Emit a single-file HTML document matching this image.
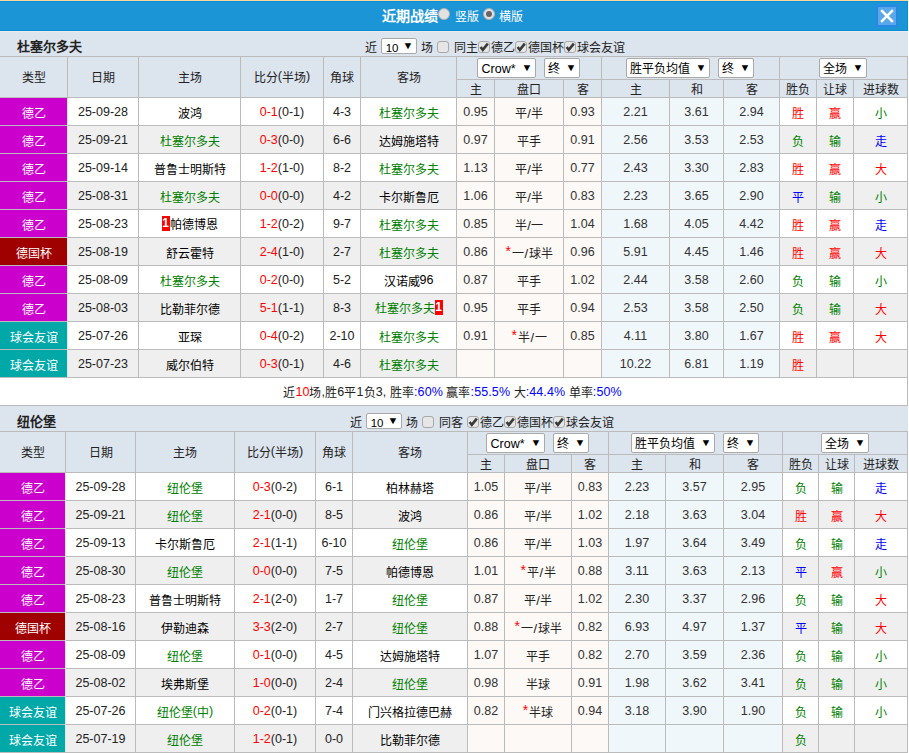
<!DOCTYPE html><html lang="zh-CN"><head><meta charset="utf-8"><style>
html,body{margin:0;padding:0;}
body{width:909px;height:753px;position:relative;overflow:hidden;background:#fff;font-family:"Liberation Sans",sans-serif;font-size:12px;color:#222;font-weight:500;}
.a{position:absolute;}
.t{display:flex;align-items:center;justify-content:center;white-space:nowrap;line-height:14px;}
.n{font-size:12.5px;position:relative;top:-2px;}
.sel{box-sizing:content-box;background:#fff;border:1px solid #a9a9a9;border-radius:2px;display:flex;align-items:center;justify-content:center;white-space:nowrap;font-size:12px;color:#000;line-height:14px;}
.sel .arr{font-size:10px;margin-left:6px;transform:scaleX(1.1);}
.cb{width:10px;height:10px;border:1px solid #a8a8a8;border-radius:3px;background:#e6e6e6;}
.cb svg{position:absolute;left:-1px;top:-1px;}
.rd{width:10px;height:10px;border:1px solid #b0b0b0;border-radius:50%;background:#e2e2e2;}
.sum .n{top:-1px;}
.sl{font-size:13px;padding:0 0.5px;}
.st{color:#f00;font-size:14px;margin-right:1px;position:relative;top:-2px;}
.flag{display:inline-block;position:relative;top:-2px;vertical-align:middle;width:8px;height:15px;background:#f00;color:#fff;font-weight:bold;font-size:12px;line-height:15px;text-align:center;}
</style></head><body><div class="a" style="left:0px;top:0px;width:908px;height:1px;background:#fcd698;"></div><div class="a" style="left:0px;top:1px;width:908px;height:30px;background:#1b95d6;box-sizing:border-box;border:1px solid #0b8dd3;border-left:none;border-top-color:#0a8dd8;"></div><div class="a t" style="left:382px;top:5px;width:60px;height:22px;color:#fff;font-weight:bold;font-size:14px;justify-content:flex-start;"><span>近期战绩</span></div><div class="a rd" style="left:438px;top:8px;"></div><div class="a t" style="left:455px;top:6px;width:30px;height:22px;color:#fff;font-size:12px;justify-content:flex-start;"><span>竖版</span></div><div class="a rd" style="left:483px;top:8px;"><div style="position:absolute;left:2px;top:2px;width:6px;height:6px;border-radius:50%;background:#666;"></div></div><div class="a t" style="left:499px;top:6px;width:30px;height:22px;color:#fff;font-size:12px;justify-content:flex-start;"><span>横版</span></div><div class="a" style="left:876px;top:5px;width:22px;height:22px;background:#5aa7ea;box-sizing:border-box;border:2px solid #2a87e3;"></div><svg class="a" style="left:876px;top:5px" width="22" height="22" viewBox="0 0 22 22"><path d="M6 6 L16 16 M16 6 L6 16" stroke="#fff" stroke-width="2.5" stroke-linecap="square"/></svg><div class="a" style="left:0px;top:31px;width:908px;height:25px;background:#dce4ee;"></div><div class="a t" style="left:17px;top:34px;width:100px;height:25px;font-weight:bold;font-size:13px;color:#222;justify-content:flex-start;"><span>杜塞尔多夫</span></div><div class="a t" style="left:365px;top:35px;width:14px;height:25px;color:#222;justify-content:flex-start;"><span>近</span></div><div class="a sel" style="left:381px;top:38px;width:34px;height:14px;"><span style="position:relative;top:1px"><span class="n" style="font-size:11.5px;top:1px;left:1px;">10</span></span><span class="arr">&#9660;</span></div><div class="a t" style="left:421px;top:35px;width:14px;height:25px;color:#222;justify-content:flex-start;"><span>场</span></div><div class="a cb" style="left:437px;top:41px;"></div><div class="a t" style="left:454px;top:35px;width:26px;height:25px;color:#222;justify-content:flex-start;"><span>同主</span></div><div class="a cb" style="left:478px;top:41px;"><svg width="12" height="12" viewBox="0 0 12 12"><path d="M2.6 6 L4.8 8.8 L9.8 2.6" stroke="#3a3a3a" stroke-width="2.6" fill="none"/></svg></div><div class="a t" style="left:491px;top:35px;width:26px;height:25px;color:#222;justify-content:flex-start;"><span>德乙</span></div><div class="a cb" style="left:515px;top:41px;"><svg width="12" height="12" viewBox="0 0 12 12"><path d="M2.6 6 L4.8 8.8 L9.8 2.6" stroke="#3a3a3a" stroke-width="2.6" fill="none"/></svg></div><div class="a t" style="left:528px;top:35px;width:38px;height:25px;color:#222;justify-content:flex-start;"><span>德国杯</span></div><div class="a cb" style="left:564px;top:41px;"><svg width="12" height="12" viewBox="0 0 12 12"><path d="M2.6 6 L4.8 8.8 L9.8 2.6" stroke="#3a3a3a" stroke-width="2.6" fill="none"/></svg></div><div class="a t" style="left:577px;top:35px;width:50px;height:25px;color:#222;justify-content:flex-start;"><span>球会友谊</span></div><div class="a" style="left:0px;top:56px;width:908px;height:41px;background:#dce4ee;"></div><div class="a" style="left:0px;top:97px;width:908px;height:28px;background:#ffffff;"></div><div class="a" style="left:457px;top:97px;width:144px;height:28px;background:#fdf9f6;"></div><div class="a" style="left:602px;top:97px;width:177px;height:28px;background:#f0f7fb;"></div><div class="a" style="left:0px;top:98px;width:67px;height:27px;background:#cc00cc;"></div><div class="a" style="left:0px;top:125px;width:908px;height:28px;background:#efefef;"></div><div class="a" style="left:457px;top:125px;width:144px;height:28px;background:#fdf9f6;"></div><div class="a" style="left:602px;top:125px;width:177px;height:28px;background:#f0f7fb;"></div><div class="a" style="left:0px;top:126px;width:67px;height:27px;background:#cc00cc;"></div><div class="a" style="left:0px;top:153px;width:908px;height:28px;background:#ffffff;"></div><div class="a" style="left:457px;top:153px;width:144px;height:28px;background:#fdf9f6;"></div><div class="a" style="left:602px;top:153px;width:177px;height:28px;background:#f0f7fb;"></div><div class="a" style="left:0px;top:154px;width:67px;height:27px;background:#cc00cc;"></div><div class="a" style="left:0px;top:181px;width:908px;height:28px;background:#efefef;"></div><div class="a" style="left:457px;top:181px;width:144px;height:28px;background:#fdf9f6;"></div><div class="a" style="left:602px;top:181px;width:177px;height:28px;background:#f0f7fb;"></div><div class="a" style="left:0px;top:182px;width:67px;height:27px;background:#cc00cc;"></div><div class="a" style="left:0px;top:209px;width:908px;height:28px;background:#ffffff;"></div><div class="a" style="left:457px;top:209px;width:144px;height:28px;background:#fdf9f6;"></div><div class="a" style="left:602px;top:209px;width:177px;height:28px;background:#f0f7fb;"></div><div class="a" style="left:0px;top:210px;width:67px;height:27px;background:#cc00cc;"></div><div class="a" style="left:0px;top:237px;width:908px;height:28px;background:#efefef;"></div><div class="a" style="left:457px;top:237px;width:144px;height:28px;background:#fdf9f6;"></div><div class="a" style="left:602px;top:237px;width:177px;height:28px;background:#f0f7fb;"></div><div class="a" style="left:0px;top:238px;width:67px;height:27px;background:#9f0000;"></div><div class="a" style="left:0px;top:265px;width:908px;height:28px;background:#ffffff;"></div><div class="a" style="left:457px;top:265px;width:144px;height:28px;background:#fdf9f6;"></div><div class="a" style="left:602px;top:265px;width:177px;height:28px;background:#f0f7fb;"></div><div class="a" style="left:0px;top:266px;width:67px;height:27px;background:#cc00cc;"></div><div class="a" style="left:0px;top:293px;width:908px;height:28px;background:#efefef;"></div><div class="a" style="left:457px;top:293px;width:144px;height:28px;background:#fdf9f6;"></div><div class="a" style="left:602px;top:293px;width:177px;height:28px;background:#f0f7fb;"></div><div class="a" style="left:0px;top:294px;width:67px;height:27px;background:#cc00cc;"></div><div class="a" style="left:0px;top:321px;width:908px;height:28px;background:#ffffff;"></div><div class="a" style="left:457px;top:321px;width:144px;height:28px;background:#fdf9f6;"></div><div class="a" style="left:602px;top:321px;width:177px;height:28px;background:#f0f7fb;"></div><div class="a" style="left:0px;top:322px;width:67px;height:27px;background:#00a8a8;"></div><div class="a" style="left:0px;top:349px;width:908px;height:28px;background:#efefef;"></div><div class="a" style="left:457px;top:349px;width:144px;height:28px;background:#fdf9f6;"></div><div class="a" style="left:602px;top:349px;width:177px;height:28px;background:#f0f7fb;"></div><div class="a" style="left:0px;top:350px;width:67px;height:27px;background:#00a8a8;"></div><div class="a" style="left:0px;top:56px;width:908px;height:1px;background:#bbbbbb;"></div><div class="a" style="left:457px;top:79px;width:451px;height:1px;background:#bbbbbb;"></div><div class="a" style="left:0px;top:97px;width:908px;height:1px;background:#bbbbbb;"></div><div class="a" style="left:0px;top:125px;width:908px;height:1px;background:#bbbbbb;"></div><div class="a" style="left:0px;top:153px;width:908px;height:1px;background:#bbbbbb;"></div><div class="a" style="left:0px;top:181px;width:908px;height:1px;background:#bbbbbb;"></div><div class="a" style="left:0px;top:209px;width:908px;height:1px;background:#bbbbbb;"></div><div class="a" style="left:0px;top:237px;width:908px;height:1px;background:#bbbbbb;"></div><div class="a" style="left:0px;top:265px;width:908px;height:1px;background:#bbbbbb;"></div><div class="a" style="left:0px;top:293px;width:908px;height:1px;background:#bbbbbb;"></div><div class="a" style="left:0px;top:321px;width:908px;height:1px;background:#bbbbbb;"></div><div class="a" style="left:0px;top:349px;width:908px;height:1px;background:#bbbbbb;"></div><div class="a" style="left:0px;top:377px;width:908px;height:1px;background:#bbbbbb;"></div><div class="a" style="left:67px;top:56px;width:1px;height:322px;background:#bbbbbb;"></div><div class="a" style="left:138px;top:56px;width:1px;height:322px;background:#bbbbbb;"></div><div class="a" style="left:240px;top:56px;width:1px;height:322px;background:#bbbbbb;"></div><div class="a" style="left:323px;top:56px;width:1px;height:322px;background:#bbbbbb;"></div><div class="a" style="left:360px;top:56px;width:1px;height:322px;background:#bbbbbb;"></div><div class="a" style="left:456px;top:56px;width:1px;height:322px;background:#bbbbbb;"></div><div class="a" style="left:494px;top:79px;width:1px;height:299px;background:#bbbbbb;"></div><div class="a" style="left:563px;top:79px;width:1px;height:299px;background:#bbbbbb;"></div><div class="a" style="left:601px;top:56px;width:1px;height:322px;background:#bbbbbb;"></div><div class="a" style="left:669px;top:79px;width:1px;height:299px;background:#bbbbbb;"></div><div class="a" style="left:723px;top:79px;width:1px;height:299px;background:#bbbbbb;"></div><div class="a" style="left:779px;top:56px;width:1px;height:322px;background:#bbbbbb;"></div><div class="a" style="left:816px;top:79px;width:1px;height:299px;background:#bbbbbb;"></div><div class="a" style="left:853px;top:79px;width:1px;height:299px;background:#bbbbbb;"></div><div class="a" style="left:907px;top:56px;width:1px;height:322px;background:#bbbbbb;"></div><div class="a" style="left:67px;top:98px;width:1px;height:279px;background:#dfe8df;"></div><div class="a t" style="left:0px;top:58px;width:67px;height:40px;color:#222;"><span>类型</span></div><div class="a t" style="left:68px;top:58px;width:70px;height:40px;color:#222;"><span>日期</span></div><div class="a t" style="left:139px;top:58px;width:101px;height:40px;color:#222;"><span>主场</span></div><div class="a t" style="left:241px;top:58px;width:82px;height:40px;color:#222;"><span>比分<span class="n">(</span>半场<span class="n">)</span></span></div><div class="a t" style="left:324px;top:58px;width:36px;height:40px;color:#222;"><span>角球</span></div><div class="a t" style="left:361px;top:58px;width:95px;height:40px;color:#222;"><span>客场</span></div><div class="a t" style="left:457px;top:81px;width:37px;height:17px;color:#222;"><span>主</span></div><div class="a t" style="left:495px;top:81px;width:68px;height:17px;color:#222;"><span>盘口</span></div><div class="a t" style="left:564px;top:81px;width:37px;height:17px;color:#222;"><span>客</span></div><div class="a t" style="left:602px;top:81px;width:67px;height:17px;color:#222;"><span>主</span></div><div class="a t" style="left:670px;top:81px;width:53px;height:17px;color:#222;"><span>和</span></div><div class="a t" style="left:724px;top:81px;width:55px;height:17px;color:#222;"><span>客</span></div><div class="a t" style="left:780px;top:81px;width:36px;height:17px;color:#222;"><span>胜负</span></div><div class="a t" style="left:817px;top:81px;width:36px;height:17px;color:#222;"><span>让球</span></div><div class="a t" style="left:854px;top:81px;width:53px;height:17px;color:#222;"><span>进球数</span></div><div class="a t" style="left:0px;top:100px;width:67px;height:27px;color:#fff;"><span>德乙</span></div><div class="a t" style="left:68px;top:100px;width:70px;height:27px;color:#222;"><span><span class="n">25-09-28</span></span></div><div class="a t" style="left:139px;top:100px;width:101px;height:27px;color:#000;"><span>波鸿</span></div><div class="a t" style="left:241px;top:100px;width:82px;height:27px;color:#222;"><span><span class="n" style="color:#f00">0-1</span><span class="n">(0-1)</span></span></div><div class="a t" style="left:324px;top:100px;width:36px;height:27px;color:#222;"><span><span class="n">4-3</span></span></div><div class="a t" style="left:361px;top:100px;width:95px;height:27px;color:#008000;"><span>杜塞尔多夫</span></div><div class="a t" style="left:457px;top:100px;width:37px;height:27px;color:#333;"><span><span class="n">0.95</span></span></div><div class="a t" style="left:495px;top:100px;width:68px;height:27px;color:#222;"><span>平<span class="sl">/</span>半</span></div><div class="a t" style="left:564px;top:100px;width:37px;height:27px;color:#333;"><span><span class="n">0.93</span></span></div><div class="a t" style="left:602px;top:100px;width:67px;height:27px;color:#333;"><span><span class="n">2.21</span></span></div><div class="a t" style="left:670px;top:100px;width:53px;height:27px;color:#333;"><span><span class="n">3.61</span></span></div><div class="a t" style="left:724px;top:100px;width:55px;height:27px;color:#333;"><span><span class="n">2.94</span></span></div><div class="a t" style="left:780px;top:100px;width:36px;height:27px;color:#ff0000;"><span>胜</span></div><div class="a t" style="left:817px;top:100px;width:36px;height:27px;color:#ff0000;"><span>赢</span></div><div class="a t" style="left:854px;top:100px;width:53px;height:27px;color:#008000;"><span>小</span></div><div class="a t" style="left:0px;top:128px;width:67px;height:27px;color:#fff;"><span>德乙</span></div><div class="a t" style="left:68px;top:128px;width:70px;height:27px;color:#222;"><span><span class="n">25-09-21</span></span></div><div class="a t" style="left:139px;top:128px;width:101px;height:27px;color:#008000;"><span>杜塞尔多夫</span></div><div class="a t" style="left:241px;top:128px;width:82px;height:27px;color:#222;"><span><span class="n" style="color:#f00">0-3</span><span class="n">(0-0)</span></span></div><div class="a t" style="left:324px;top:128px;width:36px;height:27px;color:#222;"><span><span class="n">6-6</span></span></div><div class="a t" style="left:361px;top:128px;width:95px;height:27px;color:#000;"><span>达姆施塔特</span></div><div class="a t" style="left:457px;top:128px;width:37px;height:27px;color:#333;"><span><span class="n">0.97</span></span></div><div class="a t" style="left:495px;top:128px;width:68px;height:27px;color:#222;"><span>平手</span></div><div class="a t" style="left:564px;top:128px;width:37px;height:27px;color:#333;"><span><span class="n">0.91</span></span></div><div class="a t" style="left:602px;top:128px;width:67px;height:27px;color:#333;"><span><span class="n">2.56</span></span></div><div class="a t" style="left:670px;top:128px;width:53px;height:27px;color:#333;"><span><span class="n">3.53</span></span></div><div class="a t" style="left:724px;top:128px;width:55px;height:27px;color:#333;"><span><span class="n">2.53</span></span></div><div class="a t" style="left:780px;top:128px;width:36px;height:27px;color:#008000;"><span>负</span></div><div class="a t" style="left:817px;top:128px;width:36px;height:27px;color:#008000;"><span>输</span></div><div class="a t" style="left:854px;top:128px;width:53px;height:27px;color:#0000ff;"><span>走</span></div><div class="a t" style="left:0px;top:156px;width:67px;height:27px;color:#fff;"><span>德乙</span></div><div class="a t" style="left:68px;top:156px;width:70px;height:27px;color:#222;"><span><span class="n">25-09-14</span></span></div><div class="a t" style="left:139px;top:156px;width:101px;height:27px;color:#000;"><span>普鲁士明斯特</span></div><div class="a t" style="left:241px;top:156px;width:82px;height:27px;color:#222;"><span><span class="n" style="color:#f00">1-2</span><span class="n">(1-0)</span></span></div><div class="a t" style="left:324px;top:156px;width:36px;height:27px;color:#222;"><span><span class="n">8-2</span></span></div><div class="a t" style="left:361px;top:156px;width:95px;height:27px;color:#008000;"><span>杜塞尔多夫</span></div><div class="a t" style="left:457px;top:156px;width:37px;height:27px;color:#333;"><span><span class="n">1.13</span></span></div><div class="a t" style="left:495px;top:156px;width:68px;height:27px;color:#222;"><span>平<span class="sl">/</span>半</span></div><div class="a t" style="left:564px;top:156px;width:37px;height:27px;color:#333;"><span><span class="n">0.77</span></span></div><div class="a t" style="left:602px;top:156px;width:67px;height:27px;color:#333;"><span><span class="n">2.43</span></span></div><div class="a t" style="left:670px;top:156px;width:53px;height:27px;color:#333;"><span><span class="n">3.30</span></span></div><div class="a t" style="left:724px;top:156px;width:55px;height:27px;color:#333;"><span><span class="n">2.83</span></span></div><div class="a t" style="left:780px;top:156px;width:36px;height:27px;color:#ff0000;"><span>胜</span></div><div class="a t" style="left:817px;top:156px;width:36px;height:27px;color:#ff0000;"><span>赢</span></div><div class="a t" style="left:854px;top:156px;width:53px;height:27px;color:#ff0000;"><span>大</span></div><div class="a t" style="left:0px;top:184px;width:67px;height:27px;color:#fff;"><span>德乙</span></div><div class="a t" style="left:68px;top:184px;width:70px;height:27px;color:#222;"><span><span class="n">25-08-31</span></span></div><div class="a t" style="left:139px;top:184px;width:101px;height:27px;color:#008000;"><span>杜塞尔多夫</span></div><div class="a t" style="left:241px;top:184px;width:82px;height:27px;color:#222;"><span><span class="n" style="color:#f00">0-0</span><span class="n">(0-0)</span></span></div><div class="a t" style="left:324px;top:184px;width:36px;height:27px;color:#222;"><span><span class="n">4-2</span></span></div><div class="a t" style="left:361px;top:184px;width:95px;height:27px;color:#000;"><span>卡尔斯鲁厄</span></div><div class="a t" style="left:457px;top:184px;width:37px;height:27px;color:#333;"><span><span class="n">1.06</span></span></div><div class="a t" style="left:495px;top:184px;width:68px;height:27px;color:#222;"><span>平<span class="sl">/</span>半</span></div><div class="a t" style="left:564px;top:184px;width:37px;height:27px;color:#333;"><span><span class="n">0.83</span></span></div><div class="a t" style="left:602px;top:184px;width:67px;height:27px;color:#333;"><span><span class="n">2.23</span></span></div><div class="a t" style="left:670px;top:184px;width:53px;height:27px;color:#333;"><span><span class="n">3.65</span></span></div><div class="a t" style="left:724px;top:184px;width:55px;height:27px;color:#333;"><span><span class="n">2.90</span></span></div><div class="a t" style="left:780px;top:184px;width:36px;height:27px;color:#0000ff;"><span>平</span></div><div class="a t" style="left:817px;top:184px;width:36px;height:27px;color:#008000;"><span>输</span></div><div class="a t" style="left:854px;top:184px;width:53px;height:27px;color:#008000;"><span>小</span></div><div class="a t" style="left:0px;top:212px;width:67px;height:27px;color:#fff;"><span>德乙</span></div><div class="a t" style="left:68px;top:212px;width:70px;height:27px;color:#222;"><span><span class="n">25-08-23</span></span></div><div class="a t" style="left:139px;top:212px;width:101px;height:27px;color:#000;"><span><span class="flag">1</span>帕德博恩</span></div><div class="a t" style="left:241px;top:212px;width:82px;height:27px;color:#222;"><span><span class="n" style="color:#f00">1-2</span><span class="n">(0-2)</span></span></div><div class="a t" style="left:324px;top:212px;width:36px;height:27px;color:#222;"><span><span class="n">9-7</span></span></div><div class="a t" style="left:361px;top:212px;width:95px;height:27px;color:#008000;"><span>杜塞尔多夫</span></div><div class="a t" style="left:457px;top:212px;width:37px;height:27px;color:#333;"><span><span class="n">0.85</span></span></div><div class="a t" style="left:495px;top:212px;width:68px;height:27px;color:#222;"><span>半<span class="sl">/</span>一</span></div><div class="a t" style="left:564px;top:212px;width:37px;height:27px;color:#333;"><span><span class="n">1.04</span></span></div><div class="a t" style="left:602px;top:212px;width:67px;height:27px;color:#333;"><span><span class="n">1.68</span></span></div><div class="a t" style="left:670px;top:212px;width:53px;height:27px;color:#333;"><span><span class="n">4.05</span></span></div><div class="a t" style="left:724px;top:212px;width:55px;height:27px;color:#333;"><span><span class="n">4.42</span></span></div><div class="a t" style="left:780px;top:212px;width:36px;height:27px;color:#ff0000;"><span>胜</span></div><div class="a t" style="left:817px;top:212px;width:36px;height:27px;color:#ff0000;"><span>赢</span></div><div class="a t" style="left:854px;top:212px;width:53px;height:27px;color:#0000ff;"><span>走</span></div><div class="a t" style="left:0px;top:240px;width:67px;height:27px;color:#fff;"><span>德国杯</span></div><div class="a t" style="left:68px;top:240px;width:70px;height:27px;color:#222;"><span><span class="n">25-08-19</span></span></div><div class="a t" style="left:139px;top:240px;width:101px;height:27px;color:#000;"><span>舒云霍特</span></div><div class="a t" style="left:241px;top:240px;width:82px;height:27px;color:#222;"><span><span class="n" style="color:#f00">2-4</span><span class="n">(1-0)</span></span></div><div class="a t" style="left:324px;top:240px;width:36px;height:27px;color:#222;"><span><span class="n">2-7</span></span></div><div class="a t" style="left:361px;top:240px;width:95px;height:27px;color:#008000;"><span>杜塞尔多夫</span></div><div class="a t" style="left:457px;top:240px;width:37px;height:27px;color:#333;"><span><span class="n">0.86</span></span></div><div class="a t" style="left:495px;top:240px;width:68px;height:27px;color:#222;"><span><span class="st">*</span>一<span class="sl">/</span>球半</span></div><div class="a t" style="left:564px;top:240px;width:37px;height:27px;color:#333;"><span><span class="n">0.96</span></span></div><div class="a t" style="left:602px;top:240px;width:67px;height:27px;color:#333;"><span><span class="n">5.91</span></span></div><div class="a t" style="left:670px;top:240px;width:53px;height:27px;color:#333;"><span><span class="n">4.45</span></span></div><div class="a t" style="left:724px;top:240px;width:55px;height:27px;color:#333;"><span><span class="n">1.46</span></span></div><div class="a t" style="left:780px;top:240px;width:36px;height:27px;color:#ff0000;"><span>胜</span></div><div class="a t" style="left:817px;top:240px;width:36px;height:27px;color:#ff0000;"><span>赢</span></div><div class="a t" style="left:854px;top:240px;width:53px;height:27px;color:#ff0000;"><span>大</span></div><div class="a t" style="left:0px;top:268px;width:67px;height:27px;color:#fff;"><span>德乙</span></div><div class="a t" style="left:68px;top:268px;width:70px;height:27px;color:#222;"><span><span class="n">25-08-09</span></span></div><div class="a t" style="left:139px;top:268px;width:101px;height:27px;color:#008000;"><span>杜塞尔多夫</span></div><div class="a t" style="left:241px;top:268px;width:82px;height:27px;color:#222;"><span><span class="n" style="color:#f00">0-2</span><span class="n">(0-0)</span></span></div><div class="a t" style="left:324px;top:268px;width:36px;height:27px;color:#222;"><span><span class="n">5-2</span></span></div><div class="a t" style="left:361px;top:268px;width:95px;height:27px;color:#000;"><span>汉诺威<span class="n">96</span></span></div><div class="a t" style="left:457px;top:268px;width:37px;height:27px;color:#333;"><span><span class="n">0.87</span></span></div><div class="a t" style="left:495px;top:268px;width:68px;height:27px;color:#222;"><span>平手</span></div><div class="a t" style="left:564px;top:268px;width:37px;height:27px;color:#333;"><span><span class="n">1.02</span></span></div><div class="a t" style="left:602px;top:268px;width:67px;height:27px;color:#333;"><span><span class="n">2.44</span></span></div><div class="a t" style="left:670px;top:268px;width:53px;height:27px;color:#333;"><span><span class="n">3.58</span></span></div><div class="a t" style="left:724px;top:268px;width:55px;height:27px;color:#333;"><span><span class="n">2.60</span></span></div><div class="a t" style="left:780px;top:268px;width:36px;height:27px;color:#008000;"><span>负</span></div><div class="a t" style="left:817px;top:268px;width:36px;height:27px;color:#008000;"><span>输</span></div><div class="a t" style="left:854px;top:268px;width:53px;height:27px;color:#008000;"><span>小</span></div><div class="a t" style="left:0px;top:296px;width:67px;height:27px;color:#fff;"><span>德乙</span></div><div class="a t" style="left:68px;top:296px;width:70px;height:27px;color:#222;"><span><span class="n">25-08-03</span></span></div><div class="a t" style="left:139px;top:296px;width:101px;height:27px;color:#000;"><span>比勒菲尔德</span></div><div class="a t" style="left:241px;top:296px;width:82px;height:27px;color:#222;"><span><span class="n" style="color:#f00">5-1</span><span class="n">(1-1)</span></span></div><div class="a t" style="left:324px;top:296px;width:36px;height:27px;color:#222;"><span><span class="n">8-3</span></span></div><div class="a t" style="left:361px;top:296px;width:95px;height:27px;color:#008000;"><span>杜塞尔多夫<span class="flag">1</span></span></div><div class="a t" style="left:457px;top:296px;width:37px;height:27px;color:#333;"><span><span class="n">0.95</span></span></div><div class="a t" style="left:495px;top:296px;width:68px;height:27px;color:#222;"><span>平手</span></div><div class="a t" style="left:564px;top:296px;width:37px;height:27px;color:#333;"><span><span class="n">0.94</span></span></div><div class="a t" style="left:602px;top:296px;width:67px;height:27px;color:#333;"><span><span class="n">2.53</span></span></div><div class="a t" style="left:670px;top:296px;width:53px;height:27px;color:#333;"><span><span class="n">3.58</span></span></div><div class="a t" style="left:724px;top:296px;width:55px;height:27px;color:#333;"><span><span class="n">2.50</span></span></div><div class="a t" style="left:780px;top:296px;width:36px;height:27px;color:#008000;"><span>负</span></div><div class="a t" style="left:817px;top:296px;width:36px;height:27px;color:#008000;"><span>输</span></div><div class="a t" style="left:854px;top:296px;width:53px;height:27px;color:#ff0000;"><span>大</span></div><div class="a t" style="left:0px;top:324px;width:67px;height:27px;color:#fff;"><span>球会友谊</span></div><div class="a t" style="left:68px;top:324px;width:70px;height:27px;color:#222;"><span><span class="n">25-07-26</span></span></div><div class="a t" style="left:139px;top:324px;width:101px;height:27px;color:#000;"><span>亚琛</span></div><div class="a t" style="left:241px;top:324px;width:82px;height:27px;color:#222;"><span><span class="n" style="color:#f00">0-4</span><span class="n">(0-2)</span></span></div><div class="a t" style="left:324px;top:324px;width:36px;height:27px;color:#222;"><span><span class="n">2-10</span></span></div><div class="a t" style="left:361px;top:324px;width:95px;height:27px;color:#008000;"><span>杜塞尔多夫</span></div><div class="a t" style="left:457px;top:324px;width:37px;height:27px;color:#333;"><span><span class="n">0.91</span></span></div><div class="a t" style="left:495px;top:324px;width:68px;height:27px;color:#222;"><span><span class="st">*</span>半<span class="sl">/</span>一</span></div><div class="a t" style="left:564px;top:324px;width:37px;height:27px;color:#333;"><span><span class="n">0.85</span></span></div><div class="a t" style="left:602px;top:324px;width:67px;height:27px;color:#333;"><span><span class="n">4.11</span></span></div><div class="a t" style="left:670px;top:324px;width:53px;height:27px;color:#333;"><span><span class="n">3.80</span></span></div><div class="a t" style="left:724px;top:324px;width:55px;height:27px;color:#333;"><span><span class="n">1.67</span></span></div><div class="a t" style="left:780px;top:324px;width:36px;height:27px;color:#ff0000;"><span>胜</span></div><div class="a t" style="left:817px;top:324px;width:36px;height:27px;color:#ff0000;"><span>赢</span></div><div class="a t" style="left:854px;top:324px;width:53px;height:27px;color:#ff0000;"><span>大</span></div><div class="a t" style="left:0px;top:352px;width:67px;height:27px;color:#fff;"><span>球会友谊</span></div><div class="a t" style="left:68px;top:352px;width:70px;height:27px;color:#222;"><span><span class="n">25-07-23</span></span></div><div class="a t" style="left:139px;top:352px;width:101px;height:27px;color:#000;"><span>威尔伯特</span></div><div class="a t" style="left:241px;top:352px;width:82px;height:27px;color:#222;"><span><span class="n" style="color:#f00">0-3</span><span class="n">(0-1)</span></span></div><div class="a t" style="left:324px;top:352px;width:36px;height:27px;color:#222;"><span><span class="n">4-6</span></span></div><div class="a t" style="left:361px;top:352px;width:95px;height:27px;color:#008000;"><span>杜塞尔多夫</span></div><div class="a t" style="left:457px;top:352px;width:37px;height:27px;color:#333;"><span><span class="n"></span></span></div><div class="a t" style="left:495px;top:352px;width:68px;height:27px;color:#222;"><span></span></div><div class="a t" style="left:564px;top:352px;width:37px;height:27px;color:#333;"><span><span class="n"></span></span></div><div class="a t" style="left:602px;top:352px;width:67px;height:27px;color:#333;"><span><span class="n">10.22</span></span></div><div class="a t" style="left:670px;top:352px;width:53px;height:27px;color:#333;"><span><span class="n">6.81</span></span></div><div class="a t" style="left:724px;top:352px;width:55px;height:27px;color:#333;"><span><span class="n">1.19</span></span></div><div class="a t" style="left:780px;top:352px;width:36px;height:27px;color:#ff0000;"><span>胜</span></div><div class="a t" style="left:817px;top:352px;width:36px;height:27px;color:#ff0000;"><span></span></div><div class="a t" style="left:854px;top:352px;width:53px;height:27px;color:#ff0000;"><span></span></div><div class="a" style="left:0px;top:31px;width:908px;height:1px;background:#e9ebef;"></div><div class="a" style="left:0px;top:378px;width:908px;height:27px;background:#fff;"></div><div class="a" style="left:907px;top:377px;width:1px;height:29px;background:#bbbbbb;"></div><div class="a" style="left:0px;top:405px;width:908px;height:1px;background:#bbbbbb;"></div><div class="a t sum" style="left:-1px;top:379px;width:907px;height:27px;color:#222;padding-left:0px;letter-spacing:0.1px;"><span>近<span class="n" style="color:#f00">10</span>场<span class="n">,</span>胜<span class="n">6</span>平<span class="n">1</span>负<span class="n">3, </span>胜率<span class="n" style="color:#00f">:60%</span> 赢率<span class="n" style="color:#00f">:55.5%</span> 大<span class="n" style="color:#00f">:44.4%</span> 单率<span class="n" style="color:#00f">:50%</span></span></div><div class="a" style="left:0px;top:405px;width:908px;height:1px;background:#bbbbbb;"></div><div class="a" style="left:0px;top:406px;width:908px;height:25px;background:#dce4ee;"></div><div class="a t" style="left:17px;top:409px;width:100px;height:25px;font-weight:bold;font-size:13px;color:#222;justify-content:flex-start;"><span>纽伦堡</span></div><div class="a t" style="left:350px;top:410px;width:14px;height:25px;color:#222;justify-content:flex-start;"><span>近</span></div><div class="a sel" style="left:366px;top:413px;width:34px;height:14px;"><span style="position:relative;top:1px"><span class="n" style="font-size:11.5px;top:1px;left:1px;">10</span></span><span class="arr">&#9660;</span></div><div class="a t" style="left:406px;top:410px;width:14px;height:25px;color:#222;justify-content:flex-start;"><span>场</span></div><div class="a cb" style="left:422px;top:416px;"></div><div class="a t" style="left:439px;top:410px;width:26px;height:25px;color:#222;justify-content:flex-start;"><span>同客</span></div><div class="a cb" style="left:467px;top:416px;"><svg width="12" height="12" viewBox="0 0 12 12"><path d="M2.6 6 L4.8 8.8 L9.8 2.6" stroke="#3a3a3a" stroke-width="2.6" fill="none"/></svg></div><div class="a t" style="left:480px;top:410px;width:26px;height:25px;color:#222;justify-content:flex-start;"><span>德乙</span></div><div class="a cb" style="left:504px;top:416px;"><svg width="12" height="12" viewBox="0 0 12 12"><path d="M2.6 6 L4.8 8.8 L9.8 2.6" stroke="#3a3a3a" stroke-width="2.6" fill="none"/></svg></div><div class="a t" style="left:517px;top:410px;width:38px;height:25px;color:#222;justify-content:flex-start;"><span>德国杯</span></div><div class="a cb" style="left:553px;top:416px;"><svg width="12" height="12" viewBox="0 0 12 12"><path d="M2.6 6 L4.8 8.8 L9.8 2.6" stroke="#3a3a3a" stroke-width="2.6" fill="none"/></svg></div><div class="a t" style="left:566px;top:410px;width:50px;height:25px;color:#222;justify-content:flex-start;"><span>球会友谊</span></div><div class="a" style="left:0px;top:431px;width:908px;height:41px;background:#dce4ee;"></div><div class="a" style="left:0px;top:472px;width:908px;height:28px;background:#ffffff;"></div><div class="a" style="left:468px;top:472px;width:140px;height:28px;background:#fdf9f6;"></div><div class="a" style="left:609px;top:472px;width:173px;height:28px;background:#f0f7fb;"></div><div class="a" style="left:0px;top:473px;width:65px;height:27px;background:#cc00cc;"></div><div class="a" style="left:0px;top:500px;width:908px;height:28px;background:#efefef;"></div><div class="a" style="left:468px;top:500px;width:140px;height:28px;background:#fdf9f6;"></div><div class="a" style="left:609px;top:500px;width:173px;height:28px;background:#f0f7fb;"></div><div class="a" style="left:0px;top:501px;width:65px;height:27px;background:#cc00cc;"></div><div class="a" style="left:0px;top:528px;width:908px;height:28px;background:#ffffff;"></div><div class="a" style="left:468px;top:528px;width:140px;height:28px;background:#fdf9f6;"></div><div class="a" style="left:609px;top:528px;width:173px;height:28px;background:#f0f7fb;"></div><div class="a" style="left:0px;top:529px;width:65px;height:27px;background:#cc00cc;"></div><div class="a" style="left:0px;top:556px;width:908px;height:28px;background:#efefef;"></div><div class="a" style="left:468px;top:556px;width:140px;height:28px;background:#fdf9f6;"></div><div class="a" style="left:609px;top:556px;width:173px;height:28px;background:#f0f7fb;"></div><div class="a" style="left:0px;top:557px;width:65px;height:27px;background:#cc00cc;"></div><div class="a" style="left:0px;top:584px;width:908px;height:28px;background:#ffffff;"></div><div class="a" style="left:468px;top:584px;width:140px;height:28px;background:#fdf9f6;"></div><div class="a" style="left:609px;top:584px;width:173px;height:28px;background:#f0f7fb;"></div><div class="a" style="left:0px;top:585px;width:65px;height:27px;background:#cc00cc;"></div><div class="a" style="left:0px;top:612px;width:908px;height:28px;background:#efefef;"></div><div class="a" style="left:468px;top:612px;width:140px;height:28px;background:#fdf9f6;"></div><div class="a" style="left:609px;top:612px;width:173px;height:28px;background:#f0f7fb;"></div><div class="a" style="left:0px;top:613px;width:65px;height:27px;background:#9f0000;"></div><div class="a" style="left:0px;top:640px;width:908px;height:28px;background:#ffffff;"></div><div class="a" style="left:468px;top:640px;width:140px;height:28px;background:#fdf9f6;"></div><div class="a" style="left:609px;top:640px;width:173px;height:28px;background:#f0f7fb;"></div><div class="a" style="left:0px;top:641px;width:65px;height:27px;background:#cc00cc;"></div><div class="a" style="left:0px;top:668px;width:908px;height:28px;background:#efefef;"></div><div class="a" style="left:468px;top:668px;width:140px;height:28px;background:#fdf9f6;"></div><div class="a" style="left:609px;top:668px;width:173px;height:28px;background:#f0f7fb;"></div><div class="a" style="left:0px;top:669px;width:65px;height:27px;background:#cc00cc;"></div><div class="a" style="left:0px;top:696px;width:908px;height:28px;background:#ffffff;"></div><div class="a" style="left:468px;top:696px;width:140px;height:28px;background:#fdf9f6;"></div><div class="a" style="left:609px;top:696px;width:173px;height:28px;background:#f0f7fb;"></div><div class="a" style="left:0px;top:697px;width:65px;height:27px;background:#00a8a8;"></div><div class="a" style="left:0px;top:724px;width:908px;height:28px;background:#efefef;"></div><div class="a" style="left:468px;top:724px;width:140px;height:28px;background:#fdf9f6;"></div><div class="a" style="left:609px;top:724px;width:173px;height:28px;background:#f0f7fb;"></div><div class="a" style="left:0px;top:725px;width:65px;height:27px;background:#00a8a8;"></div><div class="a" style="left:0px;top:431px;width:908px;height:1px;background:#bbbbbb;"></div><div class="a" style="left:468px;top:454px;width:440px;height:1px;background:#bbbbbb;"></div><div class="a" style="left:0px;top:472px;width:908px;height:1px;background:#bbbbbb;"></div><div class="a" style="left:0px;top:500px;width:908px;height:1px;background:#bbbbbb;"></div><div class="a" style="left:0px;top:528px;width:908px;height:1px;background:#bbbbbb;"></div><div class="a" style="left:0px;top:556px;width:908px;height:1px;background:#bbbbbb;"></div><div class="a" style="left:0px;top:584px;width:908px;height:1px;background:#bbbbbb;"></div><div class="a" style="left:0px;top:612px;width:908px;height:1px;background:#bbbbbb;"></div><div class="a" style="left:0px;top:640px;width:908px;height:1px;background:#bbbbbb;"></div><div class="a" style="left:0px;top:668px;width:908px;height:1px;background:#bbbbbb;"></div><div class="a" style="left:0px;top:696px;width:908px;height:1px;background:#bbbbbb;"></div><div class="a" style="left:0px;top:724px;width:908px;height:1px;background:#bbbbbb;"></div><div class="a" style="left:0px;top:752px;width:908px;height:1px;background:#bbbbbb;"></div><div class="a" style="left:65px;top:431px;width:1px;height:322px;background:#bbbbbb;"></div><div class="a" style="left:135px;top:431px;width:1px;height:322px;background:#bbbbbb;"></div><div class="a" style="left:234px;top:431px;width:1px;height:322px;background:#bbbbbb;"></div><div class="a" style="left:315px;top:431px;width:1px;height:322px;background:#bbbbbb;"></div><div class="a" style="left:352px;top:431px;width:1px;height:322px;background:#bbbbbb;"></div><div class="a" style="left:467px;top:431px;width:1px;height:322px;background:#bbbbbb;"></div><div class="a" style="left:504px;top:454px;width:1px;height:299px;background:#bbbbbb;"></div><div class="a" style="left:571px;top:454px;width:1px;height:299px;background:#bbbbbb;"></div><div class="a" style="left:608px;top:431px;width:1px;height:322px;background:#bbbbbb;"></div><div class="a" style="left:665px;top:454px;width:1px;height:299px;background:#bbbbbb;"></div><div class="a" style="left:723px;top:454px;width:1px;height:299px;background:#bbbbbb;"></div><div class="a" style="left:782px;top:431px;width:1px;height:322px;background:#bbbbbb;"></div><div class="a" style="left:818px;top:454px;width:1px;height:299px;background:#bbbbbb;"></div><div class="a" style="left:854px;top:454px;width:1px;height:299px;background:#bbbbbb;"></div><div class="a" style="left:907px;top:431px;width:1px;height:322px;background:#bbbbbb;"></div><div class="a" style="left:65px;top:473px;width:1px;height:279px;background:#dfe8df;"></div><div class="a t" style="left:0px;top:433px;width:65px;height:40px;color:#222;"><span>类型</span></div><div class="a t" style="left:66px;top:433px;width:69px;height:40px;color:#222;"><span>日期</span></div><div class="a t" style="left:136px;top:433px;width:98px;height:40px;color:#222;"><span>主场</span></div><div class="a t" style="left:235px;top:433px;width:80px;height:40px;color:#222;"><span>比分<span class="n">(</span>半场<span class="n">)</span></span></div><div class="a t" style="left:316px;top:433px;width:36px;height:40px;color:#222;"><span>角球</span></div><div class="a t" style="left:353px;top:433px;width:114px;height:40px;color:#222;"><span>客场</span></div><div class="a t" style="left:468px;top:456px;width:36px;height:17px;color:#222;"><span>主</span></div><div class="a t" style="left:505px;top:456px;width:66px;height:17px;color:#222;"><span>盘口</span></div><div class="a t" style="left:572px;top:456px;width:36px;height:17px;color:#222;"><span>客</span></div><div class="a t" style="left:609px;top:456px;width:56px;height:17px;color:#222;"><span>主</span></div><div class="a t" style="left:666px;top:456px;width:57px;height:17px;color:#222;"><span>和</span></div><div class="a t" style="left:724px;top:456px;width:58px;height:17px;color:#222;"><span>客</span></div><div class="a t" style="left:783px;top:456px;width:35px;height:17px;color:#222;"><span>胜负</span></div><div class="a t" style="left:819px;top:456px;width:35px;height:17px;color:#222;"><span>让球</span></div><div class="a t" style="left:855px;top:456px;width:52px;height:17px;color:#222;"><span>进球数</span></div><div class="a t" style="left:0px;top:475px;width:65px;height:27px;color:#fff;"><span>德乙</span></div><div class="a t" style="left:66px;top:475px;width:69px;height:27px;color:#222;"><span><span class="n">25-09-28</span></span></div><div class="a t" style="left:136px;top:475px;width:98px;height:27px;color:#008000;"><span>纽伦堡</span></div><div class="a t" style="left:235px;top:475px;width:80px;height:27px;color:#222;"><span><span class="n" style="color:#f00">0-3</span><span class="n">(0-2)</span></span></div><div class="a t" style="left:316px;top:475px;width:36px;height:27px;color:#222;"><span><span class="n">6-1</span></span></div><div class="a t" style="left:353px;top:475px;width:114px;height:27px;color:#000;"><span>柏林赫塔</span></div><div class="a t" style="left:468px;top:475px;width:36px;height:27px;color:#333;"><span><span class="n">1.05</span></span></div><div class="a t" style="left:505px;top:475px;width:66px;height:27px;color:#222;"><span>平<span class="sl">/</span>半</span></div><div class="a t" style="left:572px;top:475px;width:36px;height:27px;color:#333;"><span><span class="n">0.83</span></span></div><div class="a t" style="left:609px;top:475px;width:56px;height:27px;color:#333;"><span><span class="n">2.23</span></span></div><div class="a t" style="left:666px;top:475px;width:57px;height:27px;color:#333;"><span><span class="n">3.57</span></span></div><div class="a t" style="left:724px;top:475px;width:58px;height:27px;color:#333;"><span><span class="n">2.95</span></span></div><div class="a t" style="left:783px;top:475px;width:35px;height:27px;color:#008000;"><span>负</span></div><div class="a t" style="left:819px;top:475px;width:35px;height:27px;color:#008000;"><span>输</span></div><div class="a t" style="left:855px;top:475px;width:52px;height:27px;color:#0000ff;"><span>走</span></div><div class="a t" style="left:0px;top:503px;width:65px;height:27px;color:#fff;"><span>德乙</span></div><div class="a t" style="left:66px;top:503px;width:69px;height:27px;color:#222;"><span><span class="n">25-09-21</span></span></div><div class="a t" style="left:136px;top:503px;width:98px;height:27px;color:#008000;"><span>纽伦堡</span></div><div class="a t" style="left:235px;top:503px;width:80px;height:27px;color:#222;"><span><span class="n" style="color:#f00">2-1</span><span class="n">(0-0)</span></span></div><div class="a t" style="left:316px;top:503px;width:36px;height:27px;color:#222;"><span><span class="n">8-5</span></span></div><div class="a t" style="left:353px;top:503px;width:114px;height:27px;color:#000;"><span>波鸿</span></div><div class="a t" style="left:468px;top:503px;width:36px;height:27px;color:#333;"><span><span class="n">0.86</span></span></div><div class="a t" style="left:505px;top:503px;width:66px;height:27px;color:#222;"><span>平<span class="sl">/</span>半</span></div><div class="a t" style="left:572px;top:503px;width:36px;height:27px;color:#333;"><span><span class="n">1.02</span></span></div><div class="a t" style="left:609px;top:503px;width:56px;height:27px;color:#333;"><span><span class="n">2.18</span></span></div><div class="a t" style="left:666px;top:503px;width:57px;height:27px;color:#333;"><span><span class="n">3.63</span></span></div><div class="a t" style="left:724px;top:503px;width:58px;height:27px;color:#333;"><span><span class="n">3.04</span></span></div><div class="a t" style="left:783px;top:503px;width:35px;height:27px;color:#ff0000;"><span>胜</span></div><div class="a t" style="left:819px;top:503px;width:35px;height:27px;color:#ff0000;"><span>赢</span></div><div class="a t" style="left:855px;top:503px;width:52px;height:27px;color:#ff0000;"><span>大</span></div><div class="a t" style="left:0px;top:531px;width:65px;height:27px;color:#fff;"><span>德乙</span></div><div class="a t" style="left:66px;top:531px;width:69px;height:27px;color:#222;"><span><span class="n">25-09-13</span></span></div><div class="a t" style="left:136px;top:531px;width:98px;height:27px;color:#000;"><span>卡尔斯鲁厄</span></div><div class="a t" style="left:235px;top:531px;width:80px;height:27px;color:#222;"><span><span class="n" style="color:#f00">2-1</span><span class="n">(1-1)</span></span></div><div class="a t" style="left:316px;top:531px;width:36px;height:27px;color:#222;"><span><span class="n">6-10</span></span></div><div class="a t" style="left:353px;top:531px;width:114px;height:27px;color:#008000;"><span>纽伦堡</span></div><div class="a t" style="left:468px;top:531px;width:36px;height:27px;color:#333;"><span><span class="n">0.86</span></span></div><div class="a t" style="left:505px;top:531px;width:66px;height:27px;color:#222;"><span>平<span class="sl">/</span>半</span></div><div class="a t" style="left:572px;top:531px;width:36px;height:27px;color:#333;"><span><span class="n">1.03</span></span></div><div class="a t" style="left:609px;top:531px;width:56px;height:27px;color:#333;"><span><span class="n">1.97</span></span></div><div class="a t" style="left:666px;top:531px;width:57px;height:27px;color:#333;"><span><span class="n">3.64</span></span></div><div class="a t" style="left:724px;top:531px;width:58px;height:27px;color:#333;"><span><span class="n">3.49</span></span></div><div class="a t" style="left:783px;top:531px;width:35px;height:27px;color:#008000;"><span>负</span></div><div class="a t" style="left:819px;top:531px;width:35px;height:27px;color:#008000;"><span>输</span></div><div class="a t" style="left:855px;top:531px;width:52px;height:27px;color:#0000ff;"><span>走</span></div><div class="a t" style="left:0px;top:559px;width:65px;height:27px;color:#fff;"><span>德乙</span></div><div class="a t" style="left:66px;top:559px;width:69px;height:27px;color:#222;"><span><span class="n">25-08-30</span></span></div><div class="a t" style="left:136px;top:559px;width:98px;height:27px;color:#008000;"><span>纽伦堡</span></div><div class="a t" style="left:235px;top:559px;width:80px;height:27px;color:#222;"><span><span class="n" style="color:#f00">0-0</span><span class="n">(0-0)</span></span></div><div class="a t" style="left:316px;top:559px;width:36px;height:27px;color:#222;"><span><span class="n">7-5</span></span></div><div class="a t" style="left:353px;top:559px;width:114px;height:27px;color:#000;"><span>帕德博恩</span></div><div class="a t" style="left:468px;top:559px;width:36px;height:27px;color:#333;"><span><span class="n">1.01</span></span></div><div class="a t" style="left:505px;top:559px;width:66px;height:27px;color:#222;"><span><span class="st">*</span>平<span class="sl">/</span>半</span></div><div class="a t" style="left:572px;top:559px;width:36px;height:27px;color:#333;"><span><span class="n">0.88</span></span></div><div class="a t" style="left:609px;top:559px;width:56px;height:27px;color:#333;"><span><span class="n">3.11</span></span></div><div class="a t" style="left:666px;top:559px;width:57px;height:27px;color:#333;"><span><span class="n">3.63</span></span></div><div class="a t" style="left:724px;top:559px;width:58px;height:27px;color:#333;"><span><span class="n">2.13</span></span></div><div class="a t" style="left:783px;top:559px;width:35px;height:27px;color:#0000ff;"><span>平</span></div><div class="a t" style="left:819px;top:559px;width:35px;height:27px;color:#ff0000;"><span>赢</span></div><div class="a t" style="left:855px;top:559px;width:52px;height:27px;color:#008000;"><span>小</span></div><div class="a t" style="left:0px;top:587px;width:65px;height:27px;color:#fff;"><span>德乙</span></div><div class="a t" style="left:66px;top:587px;width:69px;height:27px;color:#222;"><span><span class="n">25-08-23</span></span></div><div class="a t" style="left:136px;top:587px;width:98px;height:27px;color:#000;"><span>普鲁士明斯特</span></div><div class="a t" style="left:235px;top:587px;width:80px;height:27px;color:#222;"><span><span class="n" style="color:#f00">2-1</span><span class="n">(2-0)</span></span></div><div class="a t" style="left:316px;top:587px;width:36px;height:27px;color:#222;"><span><span class="n">1-7</span></span></div><div class="a t" style="left:353px;top:587px;width:114px;height:27px;color:#008000;"><span>纽伦堡</span></div><div class="a t" style="left:468px;top:587px;width:36px;height:27px;color:#333;"><span><span class="n">0.87</span></span></div><div class="a t" style="left:505px;top:587px;width:66px;height:27px;color:#222;"><span>平<span class="sl">/</span>半</span></div><div class="a t" style="left:572px;top:587px;width:36px;height:27px;color:#333;"><span><span class="n">1.02</span></span></div><div class="a t" style="left:609px;top:587px;width:56px;height:27px;color:#333;"><span><span class="n">2.30</span></span></div><div class="a t" style="left:666px;top:587px;width:57px;height:27px;color:#333;"><span><span class="n">3.37</span></span></div><div class="a t" style="left:724px;top:587px;width:58px;height:27px;color:#333;"><span><span class="n">2.96</span></span></div><div class="a t" style="left:783px;top:587px;width:35px;height:27px;color:#008000;"><span>负</span></div><div class="a t" style="left:819px;top:587px;width:35px;height:27px;color:#008000;"><span>输</span></div><div class="a t" style="left:855px;top:587px;width:52px;height:27px;color:#ff0000;"><span>大</span></div><div class="a t" style="left:0px;top:615px;width:65px;height:27px;color:#fff;"><span>德国杯</span></div><div class="a t" style="left:66px;top:615px;width:69px;height:27px;color:#222;"><span><span class="n">25-08-16</span></span></div><div class="a t" style="left:136px;top:615px;width:98px;height:27px;color:#000;"><span>伊勒迪森</span></div><div class="a t" style="left:235px;top:615px;width:80px;height:27px;color:#222;"><span><span class="n" style="color:#f00">3-3</span><span class="n">(2-0)</span></span></div><div class="a t" style="left:316px;top:615px;width:36px;height:27px;color:#222;"><span><span class="n">2-7</span></span></div><div class="a t" style="left:353px;top:615px;width:114px;height:27px;color:#008000;"><span>纽伦堡</span></div><div class="a t" style="left:468px;top:615px;width:36px;height:27px;color:#333;"><span><span class="n">0.88</span></span></div><div class="a t" style="left:505px;top:615px;width:66px;height:27px;color:#222;"><span><span class="st">*</span>一<span class="sl">/</span>球半</span></div><div class="a t" style="left:572px;top:615px;width:36px;height:27px;color:#333;"><span><span class="n">0.82</span></span></div><div class="a t" style="left:609px;top:615px;width:56px;height:27px;color:#333;"><span><span class="n">6.93</span></span></div><div class="a t" style="left:666px;top:615px;width:57px;height:27px;color:#333;"><span><span class="n">4.97</span></span></div><div class="a t" style="left:724px;top:615px;width:58px;height:27px;color:#333;"><span><span class="n">1.37</span></span></div><div class="a t" style="left:783px;top:615px;width:35px;height:27px;color:#0000ff;"><span>平</span></div><div class="a t" style="left:819px;top:615px;width:35px;height:27px;color:#008000;"><span>输</span></div><div class="a t" style="left:855px;top:615px;width:52px;height:27px;color:#ff0000;"><span>大</span></div><div class="a t" style="left:0px;top:643px;width:65px;height:27px;color:#fff;"><span>德乙</span></div><div class="a t" style="left:66px;top:643px;width:69px;height:27px;color:#222;"><span><span class="n">25-08-09</span></span></div><div class="a t" style="left:136px;top:643px;width:98px;height:27px;color:#008000;"><span>纽伦堡</span></div><div class="a t" style="left:235px;top:643px;width:80px;height:27px;color:#222;"><span><span class="n" style="color:#f00">0-1</span><span class="n">(0-0)</span></span></div><div class="a t" style="left:316px;top:643px;width:36px;height:27px;color:#222;"><span><span class="n">4-5</span></span></div><div class="a t" style="left:353px;top:643px;width:114px;height:27px;color:#000;"><span>达姆施塔特</span></div><div class="a t" style="left:468px;top:643px;width:36px;height:27px;color:#333;"><span><span class="n">1.07</span></span></div><div class="a t" style="left:505px;top:643px;width:66px;height:27px;color:#222;"><span>平手</span></div><div class="a t" style="left:572px;top:643px;width:36px;height:27px;color:#333;"><span><span class="n">0.82</span></span></div><div class="a t" style="left:609px;top:643px;width:56px;height:27px;color:#333;"><span><span class="n">2.70</span></span></div><div class="a t" style="left:666px;top:643px;width:57px;height:27px;color:#333;"><span><span class="n">3.59</span></span></div><div class="a t" style="left:724px;top:643px;width:58px;height:27px;color:#333;"><span><span class="n">2.36</span></span></div><div class="a t" style="left:783px;top:643px;width:35px;height:27px;color:#008000;"><span>负</span></div><div class="a t" style="left:819px;top:643px;width:35px;height:27px;color:#008000;"><span>输</span></div><div class="a t" style="left:855px;top:643px;width:52px;height:27px;color:#008000;"><span>小</span></div><div class="a t" style="left:0px;top:671px;width:65px;height:27px;color:#fff;"><span>德乙</span></div><div class="a t" style="left:66px;top:671px;width:69px;height:27px;color:#222;"><span><span class="n">25-08-02</span></span></div><div class="a t" style="left:136px;top:671px;width:98px;height:27px;color:#000;"><span>埃弗斯堡</span></div><div class="a t" style="left:235px;top:671px;width:80px;height:27px;color:#222;"><span><span class="n" style="color:#f00">1-0</span><span class="n">(0-0)</span></span></div><div class="a t" style="left:316px;top:671px;width:36px;height:27px;color:#222;"><span><span class="n">2-4</span></span></div><div class="a t" style="left:353px;top:671px;width:114px;height:27px;color:#008000;"><span>纽伦堡</span></div><div class="a t" style="left:468px;top:671px;width:36px;height:27px;color:#333;"><span><span class="n">0.98</span></span></div><div class="a t" style="left:505px;top:671px;width:66px;height:27px;color:#222;"><span>半球</span></div><div class="a t" style="left:572px;top:671px;width:36px;height:27px;color:#333;"><span><span class="n">0.91</span></span></div><div class="a t" style="left:609px;top:671px;width:56px;height:27px;color:#333;"><span><span class="n">1.98</span></span></div><div class="a t" style="left:666px;top:671px;width:57px;height:27px;color:#333;"><span><span class="n">3.62</span></span></div><div class="a t" style="left:724px;top:671px;width:58px;height:27px;color:#333;"><span><span class="n">3.41</span></span></div><div class="a t" style="left:783px;top:671px;width:35px;height:27px;color:#008000;"><span>负</span></div><div class="a t" style="left:819px;top:671px;width:35px;height:27px;color:#008000;"><span>输</span></div><div class="a t" style="left:855px;top:671px;width:52px;height:27px;color:#008000;"><span>小</span></div><div class="a t" style="left:0px;top:699px;width:65px;height:27px;color:#fff;"><span>球会友谊</span></div><div class="a t" style="left:66px;top:699px;width:69px;height:27px;color:#222;"><span><span class="n">25-07-26</span></span></div><div class="a t" style="left:136px;top:699px;width:98px;height:27px;color:#008000;"><span>纽伦堡<span class="n">(</span>中<span class="n">)</span></span></div><div class="a t" style="left:235px;top:699px;width:80px;height:27px;color:#222;"><span><span class="n" style="color:#f00">0-2</span><span class="n">(0-1)</span></span></div><div class="a t" style="left:316px;top:699px;width:36px;height:27px;color:#222;"><span><span class="n">7-4</span></span></div><div class="a t" style="left:353px;top:699px;width:114px;height:27px;color:#000;"><span>门兴格拉德巴赫</span></div><div class="a t" style="left:468px;top:699px;width:36px;height:27px;color:#333;"><span><span class="n">0.82</span></span></div><div class="a t" style="left:505px;top:699px;width:66px;height:27px;color:#222;"><span><span class="st">*</span>半球</span></div><div class="a t" style="left:572px;top:699px;width:36px;height:27px;color:#333;"><span><span class="n">0.94</span></span></div><div class="a t" style="left:609px;top:699px;width:56px;height:27px;color:#333;"><span><span class="n">3.18</span></span></div><div class="a t" style="left:666px;top:699px;width:57px;height:27px;color:#333;"><span><span class="n">3.90</span></span></div><div class="a t" style="left:724px;top:699px;width:58px;height:27px;color:#333;"><span><span class="n">1.90</span></span></div><div class="a t" style="left:783px;top:699px;width:35px;height:27px;color:#008000;"><span>负</span></div><div class="a t" style="left:819px;top:699px;width:35px;height:27px;color:#008000;"><span>输</span></div><div class="a t" style="left:855px;top:699px;width:52px;height:27px;color:#008000;"><span>小</span></div><div class="a t" style="left:0px;top:727px;width:65px;height:27px;color:#fff;"><span>球会友谊</span></div><div class="a t" style="left:66px;top:727px;width:69px;height:27px;color:#222;"><span><span class="n">25-07-19</span></span></div><div class="a t" style="left:136px;top:727px;width:98px;height:27px;color:#008000;"><span>纽伦堡</span></div><div class="a t" style="left:235px;top:727px;width:80px;height:27px;color:#222;"><span><span class="n" style="color:#f00">1-2</span><span class="n">(0-1)</span></span></div><div class="a t" style="left:316px;top:727px;width:36px;height:27px;color:#222;"><span><span class="n">0-0</span></span></div><div class="a t" style="left:353px;top:727px;width:114px;height:27px;color:#000;"><span>比勒菲尔德</span></div><div class="a t" style="left:468px;top:727px;width:36px;height:27px;color:#333;"><span><span class="n"></span></span></div><div class="a t" style="left:505px;top:727px;width:66px;height:27px;color:#222;"><span></span></div><div class="a t" style="left:572px;top:727px;width:36px;height:27px;color:#333;"><span><span class="n"></span></span></div><div class="a t" style="left:609px;top:727px;width:56px;height:27px;color:#333;"><span><span class="n"></span></span></div><div class="a t" style="left:666px;top:727px;width:57px;height:27px;color:#333;"><span><span class="n"></span></span></div><div class="a t" style="left:724px;top:727px;width:58px;height:27px;color:#333;"><span><span class="n"></span></span></div><div class="a t" style="left:783px;top:727px;width:35px;height:27px;color:#008000;"><span>负</span></div><div class="a t" style="left:819px;top:727px;width:35px;height:27px;color:#008000;"><span></span></div><div class="a t" style="left:855px;top:727px;width:52px;height:27px;color:#008000;"><span></span></div><div class="a sel" style="left:477px;top:58px;width:57px;height:18px;"><span style="position:relative;top:1px"><span style="font-size:12.5px">Crow*</span></span><span class="arr">&#9660;</span></div><div class="a sel" style="left:544px;top:58px;width:34px;height:18px;"><span style="position:relative;top:1px">终</span><span class="arr">&#9660;</span></div><div class="a sel" style="left:626px;top:58px;width:82px;height:18px;"><span style="position:relative;top:1px">胜平负均值</span><span class="arr">&#9660;</span></div><div class="a sel" style="left:718px;top:58px;width:34px;height:18px;"><span style="position:relative;top:1px">终</span><span class="arr">&#9660;</span></div><div class="a sel" style="left:819px;top:58px;width:46px;height:18px;"><span style="position:relative;top:1px">全场</span><span class="arr">&#9660;</span></div><div class="a sel" style="left:486px;top:433px;width:57px;height:18px;"><span style="position:relative;top:1px"><span style="font-size:12.5px">Crow*</span></span><span class="arr">&#9660;</span></div><div class="a sel" style="left:553px;top:433px;width:34px;height:18px;"><span style="position:relative;top:1px">终</span><span class="arr">&#9660;</span></div><div class="a sel" style="left:631px;top:433px;width:82px;height:18px;"><span style="position:relative;top:1px">胜平负均值</span><span class="arr">&#9660;</span></div><div class="a sel" style="left:723px;top:433px;width:34px;height:18px;"><span style="position:relative;top:1px">终</span><span class="arr">&#9660;</span></div><div class="a sel" style="left:821px;top:433px;width:46px;height:18px;"><span style="position:relative;top:1px">全场</span><span class="arr">&#9660;</span></div></body></html>
